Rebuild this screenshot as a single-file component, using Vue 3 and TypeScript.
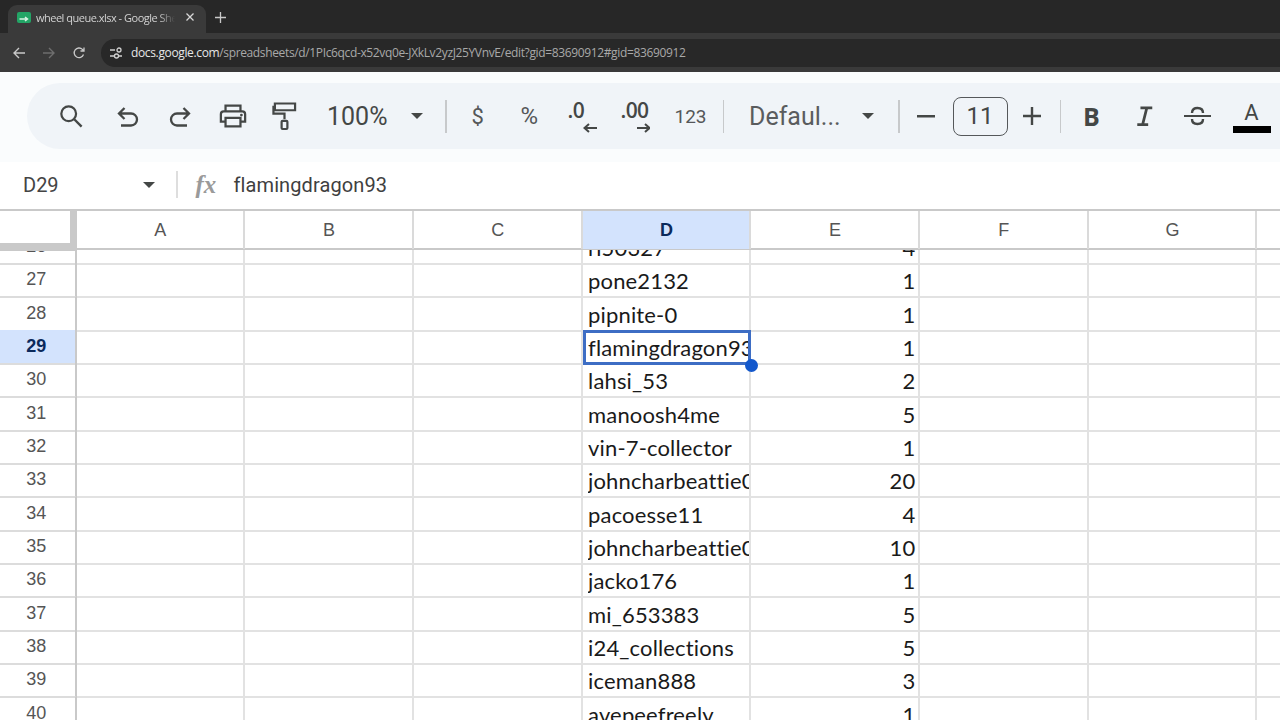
<script setup lang="ts">
interface Row { n: number; name: string; qty: number }
const rows: Row[] = [
  { n: 26, name: 'rl50327', qty: 4 },
  { n: 27, name: 'pone2132', qty: 1 },
  { n: 28, name: 'pipnite-0', qty: 1 },
  { n: 29, name: 'flamingdragon93', qty: 1 },
  { n: 30, name: 'lahsi_53', qty: 2 },
  { n: 31, name: 'manoosh4me', qty: 5 },
  { n: 32, name: 'vin-7-collector', qty: 1 },
  { n: 33, name: 'johncharbeattie0', qty: 20 },
  { n: 34, name: 'pacoesse11', qty: 4 },
  { n: 35, name: 'johncharbeattie0', qty: 10 },
  { n: 36, name: 'jacko176', qty: 1 },
  { n: 37, name: 'mi_653383', qty: 5 },
  { n: 38, name: 'i24_collections', qty: 5 },
  { n: 39, name: 'iceman888', qty: 3 },
  { n: 40, name: 'avepeefreely', qty: 1 },
]
const cols = ['A', 'B', 'C', 'D', 'E', 'F', 'G', '']
</script>

<template>
  <div class="page">
    <div class="tabstrip">
      <div class="tab">
        <svg class="favicon" width="14" height="11" viewBox="0 0 14 11">
          <rect width="14" height="11" rx="2" fill="#23a566" />
          <path d="M2.500 7h7M8 5l2.500 2L8 9" stroke="#d8f3e4" stroke-width="1.500" fill="none" />
        </svg>
        <span class="tabtitle">wheel queue.xlsx - Google Sheets</span>
        <svg class="tabclose" width="10" height="10" viewBox="0 0 10 10">
          <path d="M1.500 1.500l7 7M8.500 1.500l-7 7" stroke="#d8d8d8" stroke-width="1.300" />
        </svg>
      </div>
      <svg class="newtab" width="11" height="11" viewBox="0 0 11 11">
        <path d="M5.500 0v11M0 5.500h11" stroke="#c8c8c8" stroke-width="1.300" />
      </svg>
    </div>

    <div class="navbar">
      <svg class="navicon" width="14" height="14" viewBox="0 0 14 14">
        <path d="M13 7H2M7 2L2 7l5 5" stroke="#c9c9c9" stroke-width="1.400" fill="none" />
      </svg>
      <svg class="navicon" width="14" height="14" viewBox="0 0 14 14">
        <path d="M1 7h11M7 2l5 5-5 5" stroke="#6e6e6e" stroke-width="1.400" fill="none" />
      </svg>
      <svg class="navicon" width="14" height="14" viewBox="0 0 14 14">
        <path d="M11.500 8.500A4.800 4.800 0 1 1 10.400 3.400L12 5M12 1.500V5H8.500" stroke="#c9c9c9" stroke-width="1.300" fill="none" />
      </svg>
      <div class="omnibox">
        <svg class="tune" width="14" height="14" viewBox="0 0 14 14">
          <path d="M1 4h5M10 10h3M1 10h4" stroke="#d0d0d0" stroke-width="1.400" />
          <circle cx="10" cy="4" r="2" fill="none" stroke="#d0d0d0" stroke-width="1.300" />
          <circle cx="7.500" cy="10" r="2" fill="none" stroke="#d0d0d0" stroke-width="1.300" />
        </svg>
        <span class="url"><span class="host">docs.google.com</span>/spreadsheets/d/1PIc6qcd-x52vq0e-JXkLv2yzJ25YVnvE/edit?gid=83690912#gid=83690912</span>
      </div>
    </div>

    <div class="toolbar">
      <div class="pill">
        <div class="tool first">
          <svg width="24" height="24" viewBox="0 0 26 26"><circle cx="10.500" cy="10.500" r="8" fill="none" stroke="#444746" stroke-width="2.400" /><path d="M16.500 16.500l8 8" stroke="#444746" stroke-width="2.600" /></svg>
        </div>
        <div class="tool undo">
          <svg width="24" height="24" viewBox="0 0 24 24"><path d="M8.500 4L3 9.500 8.500 15M3.500 9.500H15a6 6 0 0 1 0 12H5" fill="none" stroke="#444746" stroke-width="2.300" /></svg>
        </div>
        <div class="tool">
          <svg width="24" height="24" viewBox="0 0 24 24"><path d="M15.500 4L21 9.500 15.500 15M20.500 9.500H9a6 6 0 0 0 0 12h10" fill="none" stroke="#444746" stroke-width="2.300" /></svg>
        </div>
        <div class="tool print">
          <svg width="28" height="26" viewBox="0 0 30 26"><path d="M7 8V2h16v6M7 19H2V11a3 3 0 0 1 3-3h20a3 3 0 0 1 3 3v8h-5" fill="none" stroke="#444746" stroke-width="2.400" /><path d="M7 15h16v9H7z" fill="none" stroke="#444746" stroke-width="2.400" /><circle cx="24" cy="12" r="1.500" fill="#444746" /></svg>
        </div>
        <div class="tool roller">
          <svg width="25" height="30" viewBox="0 0 26 30"><path d="M3 2h21v7H3zM3 5.500H1.500v7H13v6" fill="none" stroke="#444746" stroke-width="2.300" /><rect x="10" y="20" width="6" height="8.500" rx="1" fill="none" stroke="#444746" stroke-width="2.300" /></svg>
        </div>
        <span class="zoom">100%</span>
        <span class="caret zoomcaret"></span>
        <span class="sep sep1"></span>
        <span class="sym dollar">$</span>
        <span class="sym percent">%</span>
        <div class="dec dec1"><b>.0</b><svg width="14" height="10" viewBox="0 0 14 10"><path d="M14 5H2M6 1L1.500 5 6 9" fill="none" stroke="#444746" stroke-width="2" /></svg></div>
        <div class="dec dec2"><b>.00</b><svg width="13" height="10" viewBox="0 0 13 10"><path d="M0 5h11M8 1l4.500 4L8 9" fill="none" stroke="#444746" stroke-width="2" /></svg></div>
        <span class="sym num">123</span>
        <span class="sep sep2"></span>
        <span class="font">Defaul...</span>
        <span class="caret fontcaret"></span>
        <span class="sep sep3"></span>
        <svg class="minus" width="18" height="3" viewBox="0 0 18 3"><rect width="18" height="2.500" fill="#444746" /></svg>
        <div class="size">11</div>
        <svg class="plus" width="18" height="18" viewBox="0 0 18 18"><path d="M9 0v18M0 9h18" stroke="#444746" stroke-width="2.400" /></svg>
        <span class="sep sep4"></span>
        <span class="bold">B</span>
        <svg class="italic" width="18" height="20" viewBox="0 0 18 22"><path d="M4 2h13M11 2L6.500 20M0.500 20.500h12" fill="none" stroke="#444746" stroke-width="3" /></svg>
        <svg class="strike" width="27" height="20" viewBox="0 0 27 20"><path d="M0 10h27" stroke="#444746" stroke-width="2" /><path d="M8 7C8 3 10.500 2 13.500 2S19 3 19 7M8 13c0 4 2.500 5 5.500 5s5.500-1 5.500-5" fill="none" stroke="#444746" stroke-width="2.400" /></svg>
        <div class="color"><span class="colora">A</span><span class="colorbar"></span></div>
      </div>
    </div>

    <div class="formula">
      <span class="ref">D29</span>
      <span class="caret refcaret"></span>
      <span class="fsep"></span>
      <span class="fx">fx</span>
      <span class="ftext">flamingdragon93</span>
    </div>

    <div class="sheet">
      <div class="head">
        <div class="corner"></div>
        <div v-for="c in cols" :key="c" class="colhead" :class="{ active: c === 'D' }">{{ c }}</div>
      </div>
      <div class="bodyclip">
        <div class="body">
          <div v-for="r in rows" :key="r.n" class="row">
            <div class="rownum" :class="{ active: r.n === 29 }">{{ r.n }}</div>
            <div class="cell"></div>
            <div class="cell"></div>
            <div class="cell"></div>
            <div class="cell name">
              <span class="clip">{{ r.name }}</span>
              <template v-if="r.n === 29"><span class="selection"></span><span class="handle"></span></template>
            </div>
            <div class="cell qty">{{ r.qty }}</div>
            <div class="cell"></div>
            <div class="cell"></div>
            <div class="cell"></div>
          </div>
        </div>
      </div>
    </div>
  </div>
</template>

<style>
html, body { margin: 0; background: #fff; overflow: hidden; }
</style>

<style scoped>
.page { width: 1280px; height: 720px; overflow: hidden; display: flex; flex-direction: column; background: #fff; }

.tabstrip { height: 33px; background: #272727; display: flex; align-items: flex-end; padding-left: 8px; box-sizing: border-box; flex: none; }
.tab { width: 198px; height: 28px; background: #3a3a3a; border-radius: 9px 9px 0 0; display: flex; align-items: center; padding: 0 0 4px 9px; box-sizing: border-box; position: relative; }
.favicon { flex: none; margin-right: 5px; }
.tabtitle { font: 11px "Open Sans", sans-serif; color: #d2d2d2; width: 139px; white-space: nowrap; overflow: hidden; letter-spacing: -0.500px; -webkit-mask-image: linear-gradient(90deg, #000 88%, transparent); mask-image: linear-gradient(90deg, #000 88%, transparent); }
.tabclose { position: absolute; left: 177px; top: 7px; }
.newtab { margin: 0 0 10px 9px; }

.navbar { height: 39px; background: #3a3a3a; display: flex; align-items: center; flex: none; padding-left: 12px; box-sizing: border-box; }
.navicon { margin-right: 16px; flex: none; }
.omnibox { height: 28px; flex: 1; margin-left: -1px; background: #282828; border-radius: 14px 0 0 14px; display: flex; align-items: center; padding-left: 8px; }
.tune { flex: none; margin-right: 8px; }
.url { font: 12px "Open Sans", sans-serif; color: #a9a9a9; white-space: nowrap; letter-spacing: -0.360px; }
.host { color: #e6e6e6; }

.toolbar { height: 90px; flex: none; background: #fafcfd; padding: 11px 0 13px 27px; box-sizing: border-box; display: flex; }
.pill { flex: 1; background: #f0f4f8; border-radius: 33px 0 0 33px; display: flex; align-items: center; padding-left: 18px; color: #444746; }
.tool { width: 52px; height: 40px; display: flex; align-items: center; justify-content: center; flex: none; }
.tool.undo { margin-left: 5px; }
.tool.print { margin-left: 1px; }
.tool.roller { margin-left: -1px; }
.zoom { font: 25px Roboto, sans-serif; margin-left: 17px; width: 61px; flex: none; }
.caret { width: 0; height: 0; border-left: 6.500px solid transparent; border-right: 6.500px solid transparent; border-top: 6.500px solid #444746; flex: none; }
.zoomcaret { margin-left: 23px; }
.sep { width: 1.500px; height: 33px; background: #c7c9cb; flex: none; }
.sep1 { margin-left: 22px; }
.sym { font-family: Roboto, sans-serif; flex: none; color: #555759; }
.dollar { font-size: 22px; margin-left: 25px; width: 12px; }
.percent { font-size: 24px; margin-left: 37px; width: 22px; }
.dec { display: flex; flex-direction: column; width: 29px; flex: none; height: 34px; position: relative; }
.dec b { font: 600 21px/22px "Open Sans", sans-serif; color: #444746; letter-spacing: -0.600px; }
.dec svg { position: absolute; right: 0; bottom: 0; }
.dec1 { margin-left: 25px; }
.dec2 { margin-left: 24px; }
.num { font-size: 19px; margin-left: 25px; width: 30px; }
.sep2 { margin-left: 18px; }
.font { font: 25px Roboto, sans-serif; color: #5a5c5e; margin-left: 25px; width: 89px; white-space: nowrap; flex: none; }
.fontcaret { margin-left: 24px; }
.sep3 { margin-left: 24px; }
.minus { margin-left: 17px; flex: none; }
.size { width: 55px; height: 39px; box-sizing: border-box; margin-left: 18px; border: 1.500px solid #55585a; border-radius: 8px; text-align: center; font: 24px/36px Roboto, sans-serif; flex: none; }
.plus { margin-left: 15px; flex: none; }
.sep4 { margin-left: 19px; }
.bold { font: 700 25px "Open Sans", sans-serif; margin-left: 22px; width: 17px; flex: none; }
.italic { margin-left: 36px; flex: none; }
.strike { margin-left: 30px; flex: none; }
.color { margin-left: 22px; width: 37px; flex: none; display: flex; flex-direction: column; align-items: center; height: 44px; justify-content: flex-end; margin-top: 0; }
.colora { font: 22px/22px Roboto, sans-serif; }
.colorbar { width: 38px; height: 7px; background: #000; margin-top: 2px; margin-bottom: 5px; }

.formula { height: 49px; flex: none; background: #fff; border-bottom: 2px solid #c9c9c9; box-sizing: border-box; display: flex; align-items: center; padding: 0 0 2px 23px; color: #444; }
.ref { font: 20px Roboto, sans-serif; width: 120px; color: #444; flex: none; }
.fsep { width: 1.500px; height: 27px; background: #dedede; margin-left: 21px; flex: none; }
.fx { font: italic 700 25px "Liberation Serif", serif; color: #9a9a9a; margin-left: 18px; width: 39px; flex: none; }
.ftext { font: 20px Roboto, sans-serif; color: #3f3f3f; letter-spacing: 0.100px; margin-left: -1px; }

.sheet { flex: 1; min-height: 0; display: flex; flex-direction: column; }
.head { height: 39px; flex: none; display: grid; grid-template-columns: 76.500px repeat(7, 168.700px) 1fr; border-bottom: 2px solid #c9c9c9; box-sizing: border-box; position: relative; z-index: 1; background: #fff; }
.corner { background: #fff; border-right: 7px solid #c9c9c9; border-bottom: 8px solid #c9c9c9; margin-bottom: -2px; box-sizing: border-box; }
.colhead { font: 18px/38px "Liberation Sans", sans-serif; color: #555; text-align: center; border-right: 2px solid #dadada; box-sizing: border-box; padding-left: 1px; }
.colhead:last-child { border-right: 0; }
.colhead.active { background: #d3e3fd; color: #0b2a5b; font-weight: 700; }
.bodyclip { flex: 1; min-height: 0; overflow: hidden; }
.body { margin-top: -20px; }
.row { height: 33.350px; display: grid; grid-template-columns: 76.500px repeat(7, 168.700px) 1fr; }
.rownum { font: 18px/33px "Liberation Sans", sans-serif; color: #555; text-align: center; border-right: 2px solid #c9c9c9; border-bottom: 2px solid #dcdcdc; box-sizing: border-box; padding-right: 2px; }
.rownum.active { background: #d3e3fd; color: #0b2a5b; font-weight: 700; }
.cell { border-right: 2px solid #e2e2e2; border-bottom: 2px solid #e2e2e2; box-sizing: border-box; font: 22px/35px Lato, sans-serif; color: #1a1a1a; letter-spacing: 0.150px; }
.cell:last-child { border-right: 0; }
.cell.name { position: relative; padding-left: 5.500px; }
.clip { display: block; overflow: hidden; white-space: nowrap; height: 31px; }
.cell.qty { text-align: right; padding-right: 2.500px; overflow: hidden; }
.selection { position: absolute; left: 0; top: 0; right: -2px; bottom: -2px; border: 3px solid #3d6dc4; box-sizing: border-box; z-index: 2; }
.handle { position: absolute; right: -8.500px; bottom: -8.500px; width: 13px; height: 13px; border-radius: 50%; background: #1358cc; z-index: 3; }
</style>
